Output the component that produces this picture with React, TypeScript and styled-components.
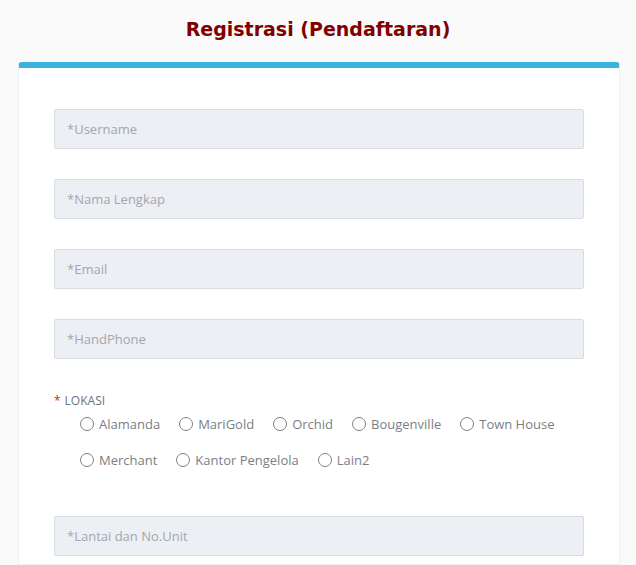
import React from "react";
import styled, { createGlobalStyle } from "styled-components";

const Global = createGlobalStyle`
  html, body { margin: 0; padding: 0; background: #fafafa; }
  body { font-family: "Open Sans", "Liberation Sans", sans-serif; }
  * { box-sizing: border-box; }
`;

const Page = styled.div`
  display: flex;
  flex-direction: column;
  height: 565px;
  overflow: hidden;
`;

const Title = styled.h1`
  margin: 0;
  height: 62px;
  flex: none;
  display: flex;
  align-items: center;
  justify-content: center;
  padding-bottom: 4px;
  font-family: "DejaVu Sans", Verdana, sans-serif;
  font-weight: bold;
  font-size: 19px;
  color: #7f0000;
`;

const Card = styled.div`
  margin: 0 16px 0 18px;
  background: #ffffff;
  border: 1px solid #eef0f3;
  border-top: 6px solid #3ab3dd;
  border-radius: 4px 4px 0 0;
  padding: 41px 35px 8px 35px;
  display: flex;
  flex-direction: column;
  gap: 30px;
  flex: 1;
`;

const Input = styled.input`
  width: 100%;
  height: 40px;
  flex: none;
  background: #eceff4;
  border: 1px solid #d8dce2;
  border-radius: 2px;
  padding: 0 12px;
  font-family: inherit;
  font-size: 13px;
  color: #555;
  outline: none;
  &::placeholder { color: #a3a7ad; }
`;

const Group = styled.div`
  display: flex;
  flex-direction: column;
  padding-top: 4px;
  padding-bottom: 14px;
`;

const Label = styled.div`
  font-size: 12px;
  color: #6f7479;
  line-height: 16px;
  margin-bottom: 3px;
  span { color: #d9232d; margin-right: 4px; }
`;

const Options = styled.div`
  display: flex;
  flex-direction: column;
  padding-left: 26px;
  row-gap: 12px;
`;

const Row = styled.div`
  display: flex;
  column-gap: 19px;
`;

const Option = styled.label`
  display: flex;
  align-items: center;
  gap: 5px;
  height: 24px;
  font-size: 13px;
  color: #7a7f86;
  cursor: pointer;
`;

const Radio = styled.span`
  width: 14px;
  height: 14px;
  border-radius: 50%;
  border: 1px solid #7c8086;
  background: #fff;
  flex: none;
`;

const row1 = ["Alamanda", "MariGold", "Orchid", "Bougenville", "Town House"];
const row2 = ["Merchant", "Kantor Pengelola", "Lain2"];

export default function App() {
  return (
    <Page>
      <Global />
      <Title>Registrasi (Pendaftaran)</Title>
      <Card>
        <Input placeholder="*Username" />
        <Input placeholder="*Nama Lengkap" />
        <Input placeholder="*Email" />
        <Input placeholder="*HandPhone" />
        <Group>
          <Label><span>*</span>LOKASI</Label>
          <Options>
            <Row>
              {row1.map((o) => (
                <Option key={o}><Radio />{o}</Option>
              ))}
            </Row>
            <Row>
              {row2.map((o) => (
                <Option key={o}><Radio />{o}</Option>
              ))}
            </Row>
          </Options>
        </Group>
        <Input placeholder="*Lantai dan No.Unit" />
      </Card>
    </Page>
  );
}
